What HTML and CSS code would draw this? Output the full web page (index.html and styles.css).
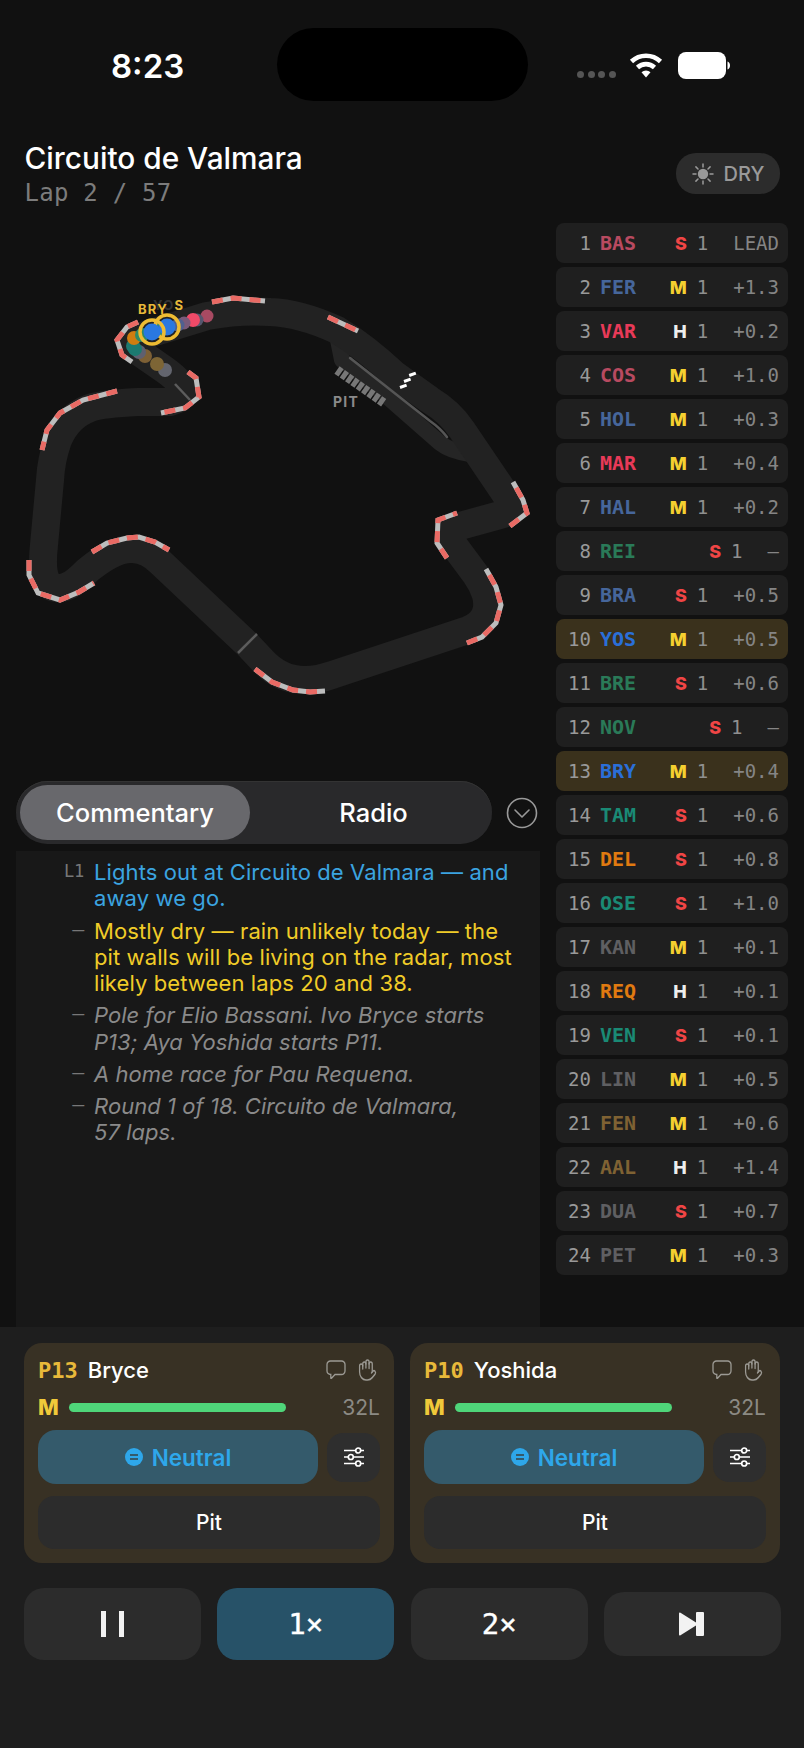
FILE: index.html
```html
<!DOCTYPE html>
<html lang="en">
<head>
<meta charset="utf-8">
<title>Circuito de Valmara</title>
<link rel="stylesheet" href="styles.css">
</head>
<body>
<svg class="defs" width="0" height="0" aria-hidden="true">
  <symbol id="i-bubble" viewBox="0 0 20 20"><path d="M4.5 1h11A3.5 3.5 0 0 1 19 4.500v6.500a3.500 3.500 0 0 1-3.500 3.500H9l-3.500 3.800a.4.4 0 0 1-.7-.3V14.500A3.500 3.500 0 0 1 1 11V4.500A3.500 3.500 0 0 1 4.500 1z" fill="none" stroke="currentColor" stroke-width="1.300"/></symbol>
  <symbol id="i-hand" viewBox="0 0 24 24" preserveAspectRatio="none"><g fill="none" stroke="currentColor" stroke-width="1.600" stroke-linecap="round" stroke-linejoin="round"><path d="M18 11V6a2 2 0 0 0-2-2a2 2 0 0 0-2 2"/><path d="M14 10V4a2 2 0 0 0-2-2a2 2 0 0 0-2 2v2"/><path d="M10 10.500V6a2 2 0 0 0-2-2a2 2 0 0 0-2 2v8"/><path d="M18 8a2 2 0 1 1 4 0v6a8 8 0 0 1-8 8h-2c-2.800 0-4.500-.86-5.990-2.340l-3.600-3.600a2 2 0 0 1 2.830-2.820L7 15"/></g></symbol>
  <symbol id="i-sliders" viewBox="0 0 22 20"><g fill="none" stroke="currentColor" stroke-width="1.700"><path d="M1 3.500h11.500M18 3.500h3M1 10h4M10.500 10H21M1 16.500h11.500M18 16.500h3"/><circle cx="15.200" cy="3.500" r="2.500"/><circle cx="7.800" cy="10" r="2.500"/><circle cx="15.200" cy="16.500" r="2.500"/></g></symbol>
  <symbol id="i-neutral" viewBox="0 0 18 18"><circle cx="9" cy="9" r="9" fill="currentColor"/><path d="M5 7h8M5 11h8" stroke="#345a6b" stroke-width="1.800"/></symbol>
</svg>

<header class="status">
  <span class="time">8:23</span>
  <div class="island"></div>
  <div class="status-right">
    <div class="signal"><i></i><i></i><i></i><i></i></div>
    <svg class="wifi" viewBox="0 0 34 26"><g fill="none" stroke="#fff" stroke-width="4.600"><path d="M2.500 9.500a21 21 0 0 1 29 0"/><path d="M8.500 15.500a12.500 12.500 0 0 1 17 0"/></g><path d="M12.500 20.200a6.500 6.500 0 0 1 9 0L17 25.500z" fill="#fff"/></svg>
    <svg class="battery" viewBox="0 0 52 27"><rect x="0" y="0" width="48" height="27" rx="8" fill="#fff"/><path d="M49.500 9.500c1.500.4 2.500 2 2.500 4s-1 3.600-2.500 4z" fill="#fff"/></svg>
  </div>
</header>

<section class="race-head">
  <div>
    <h1 class="race-title">Circuito de Valmara</h1>
    <p class="race-lap">Lap 2 / 57</p>
  </div>
  <div class="weather">
    <svg class="sun" viewBox="0 0 22 22"><circle cx="11" cy="11" r="5.200" fill="currentColor"/><path d="M11 1v3M11 18v3M1 11h3M18 11h3M3.900 3.900 6 6M16 16l2.100 2.100M3.900 18.100 6 16M16 6l2.100-2.100" stroke="currentColor" stroke-width="1.500" stroke-linecap="round"/></svg>
    <span>DRY</span>
  </div>
</section>

<main class="main">
  <div class="left">
    <svg class="map" viewBox="0 223 556 558">
      <path class="pitlane" d="M338 340 L342 360 L383 393 L440 443 Q450 451 470 454"/>
      <path class="track" d="M247 644 L262 660 Q280 680 305 680 Q318 680 332 675 L468 630 Q492 620 486 595 Q483 585 476 575 L453 544 Q442 530 460 526 L500 515 Q519 510 508 498 L462 430 Q450 412 430 400 L395 375 Q365 347 337 330 Q300 313 270 312 Q240 310 207 316 L145 335 Q120 340 139 352 L165 370 Q200 395 170 402 L138 402 Q100 404 90 408 Q68 416 58 440 Q51 460 50 480 L44 545 Q38 600 70 585 Q76 582 88 570 Q115 548 133 549 Q148 550 160 562 Z"/>
      <path class="wall" d="M350 358 L430 421 Q440 428 447 437"/>
      <path class="line" d="M238 653 L257 634"/>
      <path class="line" d="M175 384 L190 400"/>
      <path class="boxes" d="M337 370 L384 403"/>
      <path class="grid-mark" d="M400 387.500 L406.600 385.100 M404 381.500 L410.600 379.100 M409.200 375.500 L415.800 373.100"/>
      <text class="pit-label" x="333" y="407">PIT</text>
      <g class="curbs">
        <path d="M29 560 L29 575 L38 593 L60 600 L79 592 L94 583"/>
        <path d="M92 552 L107 543 L127 538 L139 537 L155 542 L169 550"/>
        <path d="M255 669 L272 682 L293 690 L310 692 L325 691"/>
        <path d="M467 643 L482 637 L496 623 L501 605 L496 587 L486 569"/>
        <path d="M447 558 L437 543 L438 520 L457 513"/>
        <path d="M510 526 L527 513 L523 500 L513 482"/>
        <path d="M328 317 L358 331"/>
        <path d="M212 302 L233 298 L265 301"/>
        <path d="M138 322 L127 327 L117 340 L122 355 L132 362"/>
        <path d="M188 372 L196 378 L199 397 L185 408 L161 413"/>
        <path d="M117 391 L83 400 L60 413 L47 430 L42 450"/>
      </g>
      <g class="curbs red">
        <path d="M29 560 L29 575 L38 593 L60 600 L79 592 L94 583"/>
        <path d="M92 552 L107 543 L127 538 L139 537 L155 542 L169 550"/>
        <path d="M255 669 L272 682 L293 690 L310 692 L325 691"/>
        <path d="M467 643 L482 637 L496 623 L501 605 L496 587 L486 569"/>
        <path d="M447 558 L437 543 L438 520 L457 513"/>
        <path d="M510 526 L527 513 L523 500 L513 482"/>
        <path d="M328 317 L358 331"/>
        <path d="M212 302 L233 298 L265 301"/>
        <path d="M138 322 L127 327 L117 340 L122 355 L132 362"/>
        <path d="M188 372 L196 378 L199 397 L185 408 L161 413"/>
        <path d="M117 391 L83 400 L60 413 L47 430 L42 450"/>
      </g>
      <circle cx="165" cy="370" r="7" fill="#63656e"/>
      <circle cx="157" cy="364" r="7" fill="#7d6535"/>
      <circle cx="145" cy="356" r="7" fill="#7d6035"/>
      <circle cx="139" cy="352" r="7" fill="#5f6070"/>
      <circle cx="135" cy="349" r="7" fill="#1c7a70"/>
      <circle cx="133" cy="346" r="7" fill="#1c7a70"/>
      <circle cx="134" cy="338" r="7" fill="#d07d10"/>
      <circle cx="142" cy="335" r="7" fill="#2f8a66"/>
      <circle cx="207" cy="316" r="6.500" fill="#a84a62"/>
      <circle cx="197" cy="320" r="6.500" fill="#54566e"/>
      <circle cx="193" cy="320" r="7" fill="#f04a68"/>
      <circle cx="184" cy="323" r="6.500" fill="#7a5a7a"/>
      <circle cx="178" cy="325" r="6.500" fill="#506090"/>
      <circle cx="160" cy="329" r="7" fill="#2f8a66"/>
      <circle cx="167" cy="327" r="8.500" fill="#2a78e0"/>
      <circle class="ring" cx="167" cy="327" r="12"/>
      <circle cx="152" cy="332" r="8.500" fill="#2a78e0"/>
      <circle class="ring" cx="152" cy="332" r="12"/>
      <text class="car-label" x="153" y="310"><tspan class="dim">YO</tspan>S</text>
      <text class="car-label" x="138" y="314">BRY</text>
    </svg>

    <div class="tab-row">
      <div class="tabs">
        <div class="tab tab-on">Commentary</div>
        <div class="tab tab-off">Radio</div>
      </div>
      <svg class="chev" viewBox="0 0 32 32"><circle cx="16" cy="16" r="14.500" fill="none" stroke="#999" stroke-width="1.600"/><path d="M9 13l7 7 7-7" fill="none" stroke="#999" stroke-width="1.600" stroke-linecap="round" stroke-linejoin="round"/></svg>
    </div>

    <div class="feed">
      <div class="feed-item"><span class="mark">L1</span><p class="blue">Lights out at Circuito de Valmara — and away we go.</p></div>
      <div class="feed-item"><span class="mark mark-dash">—</span><p class="yellow">Mostly dry — rain unlikely today — the pit walls will be living on the radar, most likely between laps 20 and 38.</p></div>
      <div class="feed-item"><span class="mark mark-dash">—</span><p class="grey">Pole for Elio Bassani. Ivo Bryce starts P13; Aya Yoshida starts P11.</p></div>
      <div class="feed-item"><span class="mark mark-dash">—</span><p class="grey">A home race for Pau Requena.</p></div>
      <div class="feed-item"><span class="mark mark-dash">—</span><p class="grey">Round 1 of 18. Circuito de Valmara,<br>57 laps.</p></div>
    </div>
  </div>

  <ol class="timing">
    <li class="row"><span class="pos">1</span><b class="code c-bas">BAS</b><b class="tyre s">S</b><span class="age">1</span><span class="gap">LEAD</span></li>
    <li class="row"><span class="pos">2</span><b class="code c-fer">FER</b><b class="tyre m">M</b><span class="age">1</span><span class="gap">+1.3</span></li>
    <li class="row"><span class="pos">3</span><b class="code c-var">VAR</b><b class="tyre h">H</b><span class="age">1</span><span class="gap">+0.2</span></li>
    <li class="row"><span class="pos">4</span><b class="code c-bas">COS</b><b class="tyre m">M</b><span class="age">1</span><span class="gap">+1.0</span></li>
    <li class="row"><span class="pos">5</span><b class="code c-fer">HOL</b><b class="tyre m">M</b><span class="age">1</span><span class="gap">+0.3</span></li>
    <li class="row"><span class="pos">6</span><b class="code c-var">MAR</b><b class="tyre m">M</b><span class="age">1</span><span class="gap">+0.4</span></li>
    <li class="row"><span class="pos">7</span><b class="code c-fer">HAL</b><b class="tyre m">M</b><span class="age">1</span><span class="gap">+0.2</span></li>
    <li class="row"><span class="pos">8</span><b class="code c-grn">REI</b><b class="tyre s">S</b><span class="age">1</span><span class="gap">—</span></li>
    <li class="row"><span class="pos">9</span><b class="code c-fer">BRA</b><b class="tyre s">S</b><span class="age">1</span><span class="gap">+0.5</span></li>
    <li class="row row-hi"><span class="pos">10</span><b class="code c-blu">YOS</b><b class="tyre m">M</b><span class="age">1</span><span class="gap">+0.5</span></li>
    <li class="row"><span class="pos">11</span><b class="code c-grn">BRE</b><b class="tyre s">S</b><span class="age">1</span><span class="gap">+0.6</span></li>
    <li class="row"><span class="pos">12</span><b class="code c-grn">NOV</b><b class="tyre s">S</b><span class="age">1</span><span class="gap">—</span></li>
    <li class="row row-hi"><span class="pos">13</span><b class="code c-blu">BRY</b><b class="tyre m">M</b><span class="age">1</span><span class="gap">+0.4</span></li>
    <li class="row"><span class="pos">14</span><b class="code c-tea">TAM</b><b class="tyre s">S</b><span class="age">1</span><span class="gap">+0.6</span></li>
    <li class="row"><span class="pos">15</span><b class="code c-org">DEL</b><b class="tyre s">S</b><span class="age">1</span><span class="gap">+0.8</span></li>
    <li class="row"><span class="pos">16</span><b class="code c-tea">OSE</b><b class="tyre s">S</b><span class="age">1</span><span class="gap">+1.0</span></li>
    <li class="row"><span class="pos">17</span><b class="code c-gry">KAN</b><b class="tyre m">M</b><span class="age">1</span><span class="gap">+0.1</span></li>
    <li class="row"><span class="pos">18</span><b class="code c-org">REQ</b><b class="tyre h">H</b><span class="age">1</span><span class="gap">+0.1</span></li>
    <li class="row"><span class="pos">19</span><b class="code c-tea">VEN</b><b class="tyre s">S</b><span class="age">1</span><span class="gap">+0.1</span></li>
    <li class="row"><span class="pos">20</span><b class="code c-gry">LIN</b><b class="tyre m">M</b><span class="age">1</span><span class="gap">+0.5</span></li>
    <li class="row"><span class="pos">21</span><b class="code c-brn">FEN</b><b class="tyre m">M</b><span class="age">1</span><span class="gap">+0.6</span></li>
    <li class="row"><span class="pos">22</span><b class="code c-brn">AAL</b><b class="tyre h">H</b><span class="age">1</span><span class="gap">+1.4</span></li>
    <li class="row"><span class="pos">23</span><b class="code c-gry">DUA</b><b class="tyre s">S</b><span class="age">1</span><span class="gap">+0.7</span></li>
    <li class="row"><span class="pos">24</span><b class="code c-gry">PET</b><b class="tyre m">M</b><span class="age">1</span><span class="gap">+0.3</span></li>
  </ol>
</main>

<footer class="dock">
  <div class="cards">
    <article class="card">
      <div class="card-head"><b class="card-pos">P13</b><span class="card-name">Bryce</span><svg class="ic-bubble"><use href="#i-bubble"/></svg><svg class="ic-hand"><use href="#i-hand"/></svg></div>
      <div class="card-tyre"><b class="card-compound">M</b><div class="bar"></div><span class="card-laps">32L</span></div>
      <div class="card-mode"><button class="btn-neutral"><svg class="ic-neutral"><use href="#i-neutral"/></svg>Neutral</button><button class="btn-tune"><svg class="ic-sliders"><use href="#i-sliders"/></svg></button></div>
      <button class="btn-pit">Pit</button>
    </article>
    <article class="card">
      <div class="card-head"><b class="card-pos">P10</b><span class="card-name">Yoshida</span><svg class="ic-bubble"><use href="#i-bubble"/></svg><svg class="ic-hand"><use href="#i-hand"/></svg></div>
      <div class="card-tyre"><b class="card-compound">M</b><div class="bar"></div><span class="card-laps">32L</span></div>
      <div class="card-mode"><button class="btn-neutral"><svg class="ic-neutral"><use href="#i-neutral"/></svg>Neutral</button><button class="btn-tune"><svg class="ic-sliders"><use href="#i-sliders"/></svg></button></div>
      <button class="btn-pit">Pit</button>
    </article>
  </div>
  <div class="controls">
    <button class="ctl"><span class="pause"><i></i><i></i></span></button>
    <button class="ctl ctl-on">1×</button>
    <button class="ctl">2×</button>
    <button class="ctl ctl-small"><svg class="skip" viewBox="0 0 28 24"><path d="M1 1.500v21a1 1 0 0 0 1.500.8L18 13.500V23h0a1 1 0 0 0 1 1h6a1 1 0 0 0 1-1V1a1 1 0 0 0-1-1h-6a1 1 0 0 0-1 1v9.500L2.500.7A1 1 0 0 0 1 1.500z" fill="#f2f2f2"/></svg></button>
  </div>
</footer>
</body>
</html>
```

FILE: styles.css
```css
* { box-sizing: border-box; }
html, body { margin: 0; padding: 0; }
body {
  width: 804px;
  height: 1748px;
  overflow: hidden;
  background: #111;
  color: #fff;
  font-family: Inter, "Noto Sans", sans-serif;
  display: flex;
  flex-direction: column;
}
.defs { position: absolute; }

/* status bar */
.status {
  height: 140px;
  padding: 28px 0 0 111px;
  display: flex;
  align-items: flex-start;
  flex: none;
}
.time { width: 166px; height: 73px; line-height: 76px; font-size: 33px; font-weight: 600; }
.island { width: 251px; height: 73px; border-radius: 37px; background: #000; }
.status-right { margin-left: 49px; height: 73px; display: flex; align-items: flex-start; padding-top: 24px; }
.signal { display: flex; gap: 3.5px; margin-top: 19px; }
.signal i { width: 7px; height: 7px; border-radius: 50%; background: #555; }
.wifi { width: 34px; height: 26px; margin-left: 13px; }
.battery { width: 52px; height: 27px; margin-left: 15px; }

/* race header */
.race-head {
  height: 83px;
  padding: 0 24px 0 24.5px;
  display: flex;
  justify-content: space-between;
  align-items: flex-start;
  flex: none;
}
.race-title { margin: 1px 0 0; font-size: 29.8px; line-height: 34px; font-weight: 500; }
.race-lap { margin: 4px 0 0; font-family: "DejaVu Sans Mono", monospace; font-size: 24px; line-height: 28px; letter-spacing: .25px; color: #7c7c7c; font-weight: 400; }
.weather {
  width: 104px; height: 41px; margin-top: 13px;
  border-radius: 20px; background: #2c2c2c; color: #9a9a9a;
  display: flex; align-items: center; justify-content: center; gap: 10px;
  font-size: 20px; font-weight: 500;
}
.sun { width: 22px; height: 22px; }

/* main */
.main { height: 1104px; display: flex; flex: none; }
.left { width: 556px; display: flex; flex-direction: column; flex: none; }
.map { width: 556px; height: 558px; display: block; flex: none; }
.track { fill: none; stroke: #222; stroke-width: 28; stroke-linejoin: round; }
.pitlane { fill: none; stroke: #252525; stroke-width: 16; stroke-linejoin: round; }
.wall { fill: none; stroke: #555; stroke-width: 2.5; stroke-linecap: round; }
.line { stroke: #5c5c5c; stroke-width: 2.5; }
.boxes { stroke: #777; stroke-width: 9; stroke-dasharray: 5 1.5; fill: none; }
.grid-mark { stroke: #fff; stroke-width: 3; fill: none; }
.pit-label { fill: #8a8a8a; font-size: 14px; font-weight: 700; letter-spacing: 1.2px; }
.curbs path { fill: none; stroke: #bdbdbd; stroke-width: 5; }
.curbs.red path { stroke: #e96a64; stroke-dasharray: 11 8; }
.ring { fill: none; stroke: #eebc32; stroke-width: 3.5; }
.car-label { fill: #e8b93a; font-size: 13px; font-weight: 700; letter-spacing: 1.2px; }
.car-label .dim { fill: #333; }

.tab-row { margin: 0 16px; height: 63px; display: flex; align-items: center; flex: none; }
.tabs {
  width: 476px; height: 63px; padding: 4px;
  border-radius: 32px; background: #29292b;
  display: flex; align-items: center;
  box-shadow: inset 0 1px 0 #333;
}
.tab { flex: 1; height: 55px; line-height: 55px; text-align: center; font-size: 25.5px; font-weight: 500; border-radius: 28px; }
.tab-on { flex: 0 0 230px; background: #68686c; }
.tab-off { padding-left: 9px; }
.chev { width: 32px; height: 32px; margin-left: 14px; }

.feed { margin: 7px 16px 0; height: 476px; background: #181818; padding: 8px 0 0 43px; flex: none; }
.feed-item { display: flex; margin-bottom: 5.7px; }
.feed-item p { margin: 0; font-size: 22px; line-height: 26.4px; width: 426px; letter-spacing: .1px; }
.mark { width: 35px; padding-right: 10px; text-align: right; flex: none; font-family: "DejaVu Sans Mono", monospace; font-size: 17px; line-height: 24px; color: #777; letter-spacing: -.2px; }
.mark-dash { font-size: 20px; line-height: 22px; }
.blue { color: #3ba4e0; }
.yellow { color: #f0cc28; }
.feed-item .grey { color: #8a8a8a; font-style: italic; letter-spacing: .05px; }

/* timing */
.timing { width: 232px; margin: 0; padding: 0; list-style: none; display: flex; flex-direction: column; gap: 4px; flex: none; }
.row {
  height: 40px; padding: 0 9px 0 12px; border-radius: 8px; background: #1f1f1f;
  display: flex; align-items: center;
  font-family: "DejaVu Sans Mono", monospace; font-size: 19px; color: #8f8f8f;
}
.row-hi { background: #3a311c; }
.pos { width: 23px; text-align: right; color: #999; flex: none; }
.code { margin-left: 9px; font-size: 20px; font-weight: 700; flex: none; }
.tyre { margin-left: auto; font-family: Inter, sans-serif; font-size: 18px; font-weight: 800; }
.s { color: #f04545; }
.m { color: #f5d030; }
.h { color: #eee; }
.age { margin-left: 10px; }
.gap { margin-left: 25px; color: #858585; }
.c-bas { color: #b84a60; }
.c-fer { color: #46669b; }
.c-var { color: #e83a58; }
.c-grn { color: #2a7a58; }
.c-blu { color: #2a6fd8; }
.c-tea { color: #1a8a75; }
.c-org { color: #e07a10; }
.c-gry { color: #5f5f62; }
.c-brn { color: #7f6233; }

/* dock */
.dock { flex: 1; background: #1e1e1e; padding: 16px 24px 0; }
.cards { display: flex; gap: 16px; }
.card {
  width: 370px; height: 220px; padding: 14px; border-radius: 18px; background: #383124;
  display: flex; flex-direction: column;
}
.card-head { height: 26px; display: flex; align-items: center; }
.card-pos { font-family: "DejaVu Sans Mono", monospace; font-size: 22px; font-weight: 700; color: #e8b93a; }
.card-name { margin-left: 10px; font-size: 22px; font-weight: 500; }
.ic-bubble { width: 20px; height: 20px; margin-left: auto; color: #9c9a94; }
.ic-hand { width: 19px; height: 24px; margin-left: 12px; margin-right: 3px; color: #9c9a94; transform: scaleX(-1); }
.card-tyre { height: 26px; margin-top: 11px; display: flex; align-items: center; }
.card-compound { width: 31px; font-size: 22px; font-weight: 800; color: #f0c93a; flex: none; }
.bar { width: 217px; height: 9px; border-radius: 5px; background: #4fd67a; flex: none; }
.card-laps { margin-left: auto; font-size: 21px; color: #8c8a84; }
.card-mode { height: 54px; margin-top: 10px; display: flex; align-items: center; justify-content: space-between; }
button { border: 0; color: inherit; font-family: inherit; padding: 0; }
.btn-neutral {
  width: 280px; height: 54px; border-radius: 18px; background: #345a6b; color: #2ea7ea;
  display: flex; align-items: center; justify-content: center; gap: 9px;
  font-size: 22.5px; font-weight: 600;
}
.ic-neutral { width: 18px; height: 18px; }
.btn-tune { width: 53px; height: 49px; border-radius: 16px; background: #2e2e2e; display: flex; align-items: center; justify-content: center; color: #fff; }
.ic-sliders { width: 22px; height: 20px; }
.btn-pit { width: 342px; height: 53px; margin-top: 12px; border-radius: 16px; background: #2c2c2c; font-size: 21px; font-weight: 500; color: #fff; }

.controls { margin-top: 25px; display: grid; grid-template-columns: repeat(4, 177px); column-gap: 16.33px; align-items: center; }
.ctl {
  height: 72px; border-radius: 20px; background: #2c2c2c; color: #fff;
  font-family: "DejaVu Sans Mono", monospace; font-size: 29px; font-weight: 400;
  -webkit-text-stroke: .4px #fff;
  display: flex; align-items: center; justify-content: center;
}
.ctl-on { background: #275268; }
.ctl-small { height: 64px; }
.pause { display: flex; gap: 13px; }
.pause i { width: 5px; height: 26px; background: #f2f2f2; }
.skip { width: 28px; height: 24px; }
```
